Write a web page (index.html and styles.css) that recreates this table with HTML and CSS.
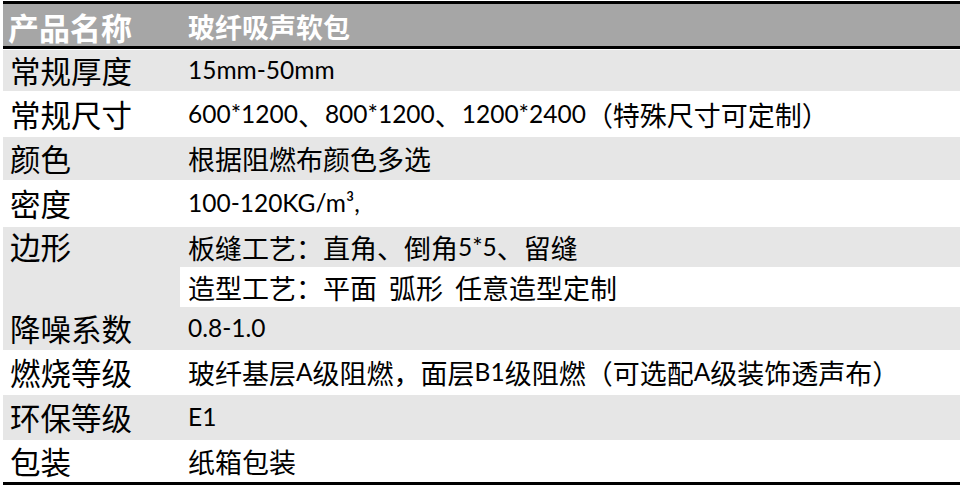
FILE: index.html
```html
<!DOCTYPE html>
<html lang="zh">
<head>
<meta charset="utf-8">
<title>玻纤吸声软包</title>
<link rel="stylesheet" href="styles.css">
</head>
<body>
<div class="spec">
  <div class="head">
    <div class="hl">产品名称</div>
    <div class="hv">玻纤吸声软包</div>
  </div>
  <div class="body">
    <div class="lab g">常规厚度</div><div class="val g"><span class="n">15mm-50mm</span></div>
    <div class="lab w">常规尺寸</div><div class="val w"><span class="n">600*1200</span>、<span class="n">800*1200</span>、<span class="n">1200*2400</span>（特殊尺寸可定制）</div>
    <div class="lab g">颜色</div><div class="val g">根据阻燃布颜色多选</div>
    <div class="lab w">密度</div><div class="val w"><span class="n">100-120KG/m³,</span></div>
    <div class="lab g span2 top">边形</div><div class="val g">板缝工艺：直角、倒角<span class="n">5*5</span>、留缝</div>
    <div class="val w">造型工艺：平面<span class="sp"> </span>弧形<span class="sp"> </span>任意造型定制</div>
    <div class="lab g">降噪系数</div><div class="val g"><span class="n">0.8-1.0</span></div>
    <div class="lab w">燃烧等级</div><div class="val w">玻纤基层<span class="n">A</span>级阻燃，面层<span class="n">B1</span>级阻燃（可选配<span class="n">A</span>级装饰透声布）</div>
    <div class="lab g">环保等级</div><div class="val g"><span class="n">E1</span></div>
    <div class="lab w">包装</div><div class="val w">纸箱包装</div>
  </div>
</div>
</body>
</html>
```

FILE: styles.css
```css
html, body {
  margin: 0;
  padding: 0;
  background: #ffffff;
}

body {
  font-family: "Noto Sans CJK SC", sans-serif;
  color: #000000;
}

.spec {
  width: 957px;
  margin: 1px 0 0 3px;
  border-top: 3px solid #000000;
  border-bottom: 3px solid #000000;
}

.head {
  display: grid;
  grid-template-columns: 177px 1fr;
  height: 42px;
  background: #a6a6a6;
  border-bottom: 3px solid #000000;
  margin-bottom: 1px;
  color: #ffffff;
  font-weight: 700;
}

.hl {
  display: flex;
  align-items: center;
  padding-left: 5px;
  font-size: 31px;
}

.hv {
  display: flex;
  align-items: center;
  padding-left: 8px;
  font-size: 27px;
}

.body {
  display: grid;
  grid-template-columns: 177px 1fr;
  grid-template-rows: 41px 46px 43px 47px 40px 40px 43px 45px 45px 42px;
}

.lab {
  display: flex;
  align-items: center;
  padding-left: 7px;
  font-size: 30.5px;
  line-height: 1;
}

.val {
  display: flex;
  align-items: center;
  padding-left: 8px;
  font-size: 27px;
  line-height: 1;
  white-space: nowrap;
}

.n {
  font-family: "Lato", sans-serif;
  font-size: 24.5px;
}

.sp {
  display: inline-block;
  width: 12px;
}

.span2 {
  grid-row: span 2;
}

.top {
  align-items: flex-start;
  padding-top: 4px;
}

.g {
  background: #e6e6e6;
}

.w {
  background: #ffffff;
}
```
